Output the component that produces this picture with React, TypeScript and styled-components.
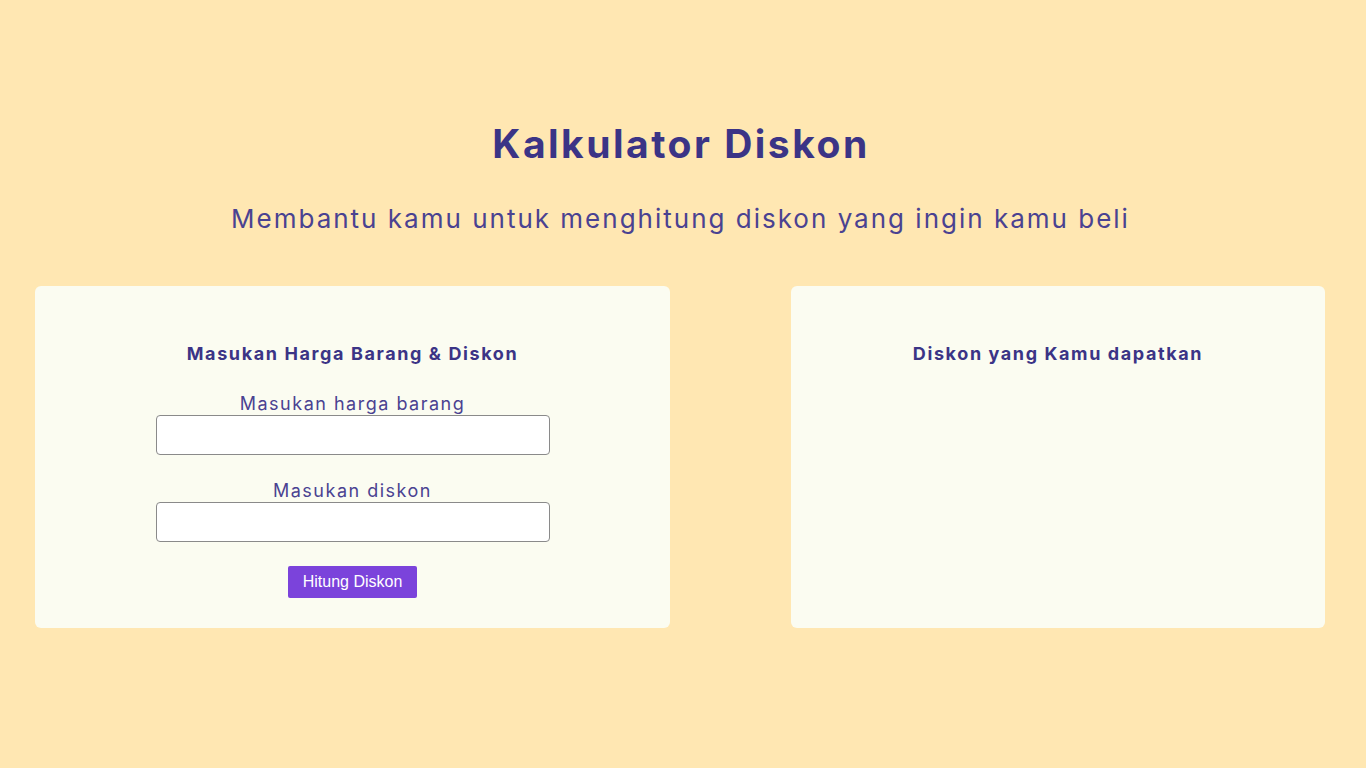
import React from "react";
import styled, { createGlobalStyle } from "styled-components";

const Global = createGlobalStyle`
  html, body { margin: 0; padding: 0; }
  body {
    background: #ffe7b2;
    font-family: "Inter", "Open Sans", sans-serif;
    color: #3b3486;
  }
`;

const Page = styled.main`
  min-height: 768px;
  box-sizing: border-box;
  padding: 118px 41px 0 35px;
  display: flex;
  flex-direction: column;
`;

const Title = styled.h1`
  margin: 0;
  text-align: center;
  font-size: 39px;
  line-height: 52px;
  font-weight: 700;
  color: #3b3486;
  letter-spacing: 2.5px;
  padding-left: 2px;
`;

const Subtitle = styled.p`
  margin: 31px 0 0;
  text-align: center;
  font-size: 26px;
  line-height: 36px;
  font-weight: 400;
  color: #4a4291;
  letter-spacing: 2px;
  padding-left: 1px;
`;

const Row = styled.div`
  margin-top: 49px;
  display: flex;
  gap: 121px;
`;

const Card = styled.section<{ $w: number }>`
  width: ${(p) => p.$w}px;
  height: 342px;
  box-sizing: border-box;
  background: #fbfcf1;
  border-radius: 6px;
  padding-top: 56px;
  display: flex;
  flex-direction: column;
  align-items: center;
`;

const CardTitle = styled.h2`
  margin: 0;
  font-size: 18px;
  line-height: 24px;
  font-weight: 700;
  color: #3b3486;
  letter-spacing: 1.6px;
`;

const Field = styled.label`
  display: flex;
  flex-direction: column;
  align-items: center;
  margin-top: 26px;
  & + & { margin-top: 24px; }
`;

const LabelText = styled.span`
  font-size: 18px;
  line-height: 24px;
  color: #4a4291;
  letter-spacing: 1.5px;
`;

const Input = styled.input`
  width: 394px;
  height: 40px;
  box-sizing: border-box;
  border: 1px solid #8a8a8a;
  border-radius: 4px;
  background: #fff;
  margin-top: -1px;
`;

const Button = styled.button`
  margin-top: 24px;
  width: 129px;
  height: 32px;
  border: none;
  border-radius: 2px;
  background: #7b43db;
  color: #fff;
  font-family: "Liberation Sans", Arial, sans-serif;
  font-size: 16px;
  padding: 0;
`;

export default function App() {
  return (
    <>
      <Global />
      <Page>
        <Title>Kalkulator Diskon</Title>
        <Subtitle>Membantu kamu untuk menghitung diskon yang ingin kamu beli</Subtitle>
        <Row>
          <Card $w={635}>
            <CardTitle>Masukan Harga Barang &amp; Diskon</CardTitle>
            <Field>
              <LabelText>Masukan harga barang</LabelText>
              <Input type="text" />
            </Field>
            <Field>
              <LabelText>Masukan diskon</LabelText>
              <Input type="text" />
            </Field>
            <Button>Hitung Diskon</Button>
          </Card>
          <Card $w={534}>
            <CardTitle>Diskon yang Kamu dapatkan</CardTitle>
          </Card>
        </Row>
      </Page>
    </>
  );
}
